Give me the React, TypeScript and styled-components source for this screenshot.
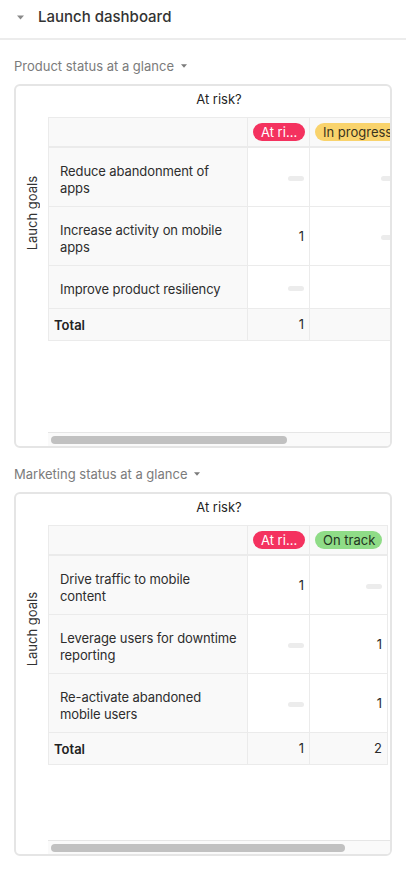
import React from "react";
import styled, { createGlobalStyle } from "styled-components";

const GlobalStyle = createGlobalStyle`
  html, body { margin: 0; padding: 0; background: #fff; }
  body {
    font-family: Inter, "Noto Sans", "Liberation Sans", sans-serif;
    color: #2b2b2b;
    -webkit-font-smoothing: antialiased;
  }
  * { box-sizing: border-box; }
`;

type Tone = "red" | "yellow" | "green";

const toneBg: Record<Tone, string> = {
  red: "#f4325f",
  yellow: "#f9d36c",
  green: "#8fdc87",
};
const toneFg: Record<Tone, string> = {
  red: "#ffffff",
  yellow: "#3a3320",
  green: "#22331f",
};

type Cell = number | null;

interface Column {
  label: string;
  tone: Tone;
  width: number;
  truncate?: boolean;
}

interface Report {
  title: string;
  columns: Column[];
  rows: { lines: string[]; values: Cell[] }[];
  totals: Cell[];
  contentWidth: number;
}

const reports: Report[] = [
  {
    title: "Product status at a glance",
    columns: [
      { label: "At risk", tone: "red", width: 62, truncate: true },
      { label: "In progress", tone: "yellow", width: 93 },
      { label: "On track", tone: "green", width: 132 },
    ],
    rows: [
      { lines: ["Reduce abandonment of", "apps"], values: [null, null, 1] },
      { lines: ["Increase activity on mobile", "apps"], values: [1, null, null] },
      { lines: ["Improve product resiliency"], values: [null, 1, null] },
    ],
    totals: [1, 1, 1],
    contentWidth: 487,
  },
  {
    title: "Marketing status at a glance",
    columns: [
      { label: "At risk", tone: "red", width: 62, truncate: true },
      { label: "On track", tone: "green", width: 78 },
    ],
    rows: [
      { lines: ["Drive traffic to mobile", "content"], values: [1, null] },
      { lines: ["Leverage users for downtime", "reporting"], values: [null, 1] },
      { lines: ["Re-activate abandoned", "mobile users"], values: [null, 1] },
    ],
    totals: [1, 2],
    contentWidth: 391,
  },
];

const LABEL_COL = 200;
const VIEWPORT = 342;
const TRACK_INNER = 336;
const rowHeight = (lines: number) => 26 + lines * 16;

/* ---------- page header ---------- */

const Page = styled.div`
  width: 406px;
  padding-bottom: 20px;
`;

const Header = styled.header`
  display: flex;
  align-items: center;
  gap: 14px;
  padding: 8px 0 12px 17px;
  border-bottom: 2px solid #ececec;
`;

const HeaderTitle = styled.h1`
  margin: 0;
  font-size: 15px;
  font-weight: 500;
  line-height: 18px;
  color: #333;
`;

const Sections = styled.div`
  display: flex;
  flex-direction: column;
  gap: 16px;
  padding: 16px 14px 0;
`;

const Section = styled.section`
  display: flex;
  flex-direction: column;
  gap: 8px;
`;

const SectionLabel = styled.div`
  display: flex;
  align-items: center;
  gap: 7px;
  font-size: 13px;
  line-height: 20px;
  color: #7b7b7b;
`;

/* ---------- card ---------- */

const Card = styled.div`
  display: flex;
  border: 2px solid #e5e5e5;
  border-radius: 6px;
  overflow: hidden;
  background: #fff;
`;

const AxisCol = styled.div`
  width: 32px;
  flex: none;
  padding-top: 31px;
`;

const AxisBox = styled.div<{ $h: number }>`
  height: ${(p) => p.$h}px;
  display: flex;
  align-items: center;
  justify-content: center;
`;

const AxisLabel = styled.span`
  writing-mode: vertical-rl;
  transform: rotate(180deg);
  font-size: 13px;
  line-height: 16px;
  color: #333;
  white-space: nowrap;
`;

const Main = styled.div`
  width: ${VIEWPORT}px;
  flex: none;
  display: flex;
  flex-direction: column;
`;

const CardTitle = styled.div`
  padding: 4px 0 9px;
  text-align: center;
  font-size: 13px;
  font-weight: 400;
  line-height: 18px;
  color: #1f1f1f;
`;

const Viewport = styled.div`
  height: 315px;
  overflow: hidden;
`;

const Table = styled.div`
  display: flex;
  flex-direction: column;
  width: max-content;
  border-top: 1px solid #ebebeb;
`;

const Row = styled.div<{ $cols: string; $kind: "head" | "body" | "total" }>`
  display: grid;
  grid-template-columns: ${(p) => p.$cols};
  background: ${(p) => (p.$kind === "body" ? "#fff" : "#f9f9f9")};
  border-bottom: ${(p) => (p.$kind === "head" ? "2px" : "1px")} solid #ebebeb;
`;

const HeadCell = styled.div`
  height: 28px;
  display: flex;
  align-items: center;
  padding: 0 4px 0 5px;
  border-right: 1px solid #ebebeb;
  overflow: hidden;
  &:first-child { border-left: 1px solid #ebebeb; }
`;

const LabelCell = styled.div<{ $h: number }>`
  height: ${(p) => p.$h}px;
  background: #f9f9f9;
  border-left: 1px solid #ebebeb;
  border-right: 1px solid #ebebeb;
  padding: 15px 4px 0 11px;
  font-size: 13px;
  line-height: 17px;
  letter-spacing: -0.1px;
  color: #2d2d2d;
`;

const TotalCell = styled.div`
  height: 31px;
  display: flex;
  align-items: center;
  background: #f9f9f9;
  border-left: 1px solid #ebebeb;
  border-right: 1px solid #ebebeb;
  padding: 0 8px 0 5px;
  font-size: 13px;
  font-weight: 600;
  color: #222;
`;

const Line = styled.span`
  display: block;
  white-space: nowrap;
`;

const ValueCell = styled.div`
  display: flex;
  align-items: center;
  justify-content: flex-end;
  padding: 0 5px;
  border-right: 1px solid #ebebeb;
  font-size: 13px;
  line-height: 17px;
  color: #2b2b2b;
`;

const Pill = styled.span<{ $tone: Tone; $truncate?: boolean }>`
  display: inline-block;
  flex: none;
  max-width: ${(p) => (p.$truncate ? "100%" : "none")};
  height: 18px;
  padding: 0 7px 0 8px;
  border-radius: 9px;
  background: ${(p) => toneBg[p.$tone]};
  color: ${(p) => toneFg[p.$tone]};
  font-size: 13px;
  line-height: 18px;
  white-space: nowrap;
  overflow: hidden;
  text-overflow: ellipsis;
`;

const Dash = styled.span`
  width: 16px;
  height: 5px;
  margin-top: 3px;
  border-radius: 3px;
  background: #ececec;
`;

const Track = styled.div`
  height: 14px;
  padding: 3px;
  border-top: 1px solid #e6e6e6;
  background: #fafafa;
`;

const Thumb = styled.div`
  height: 8px;
  border-radius: 4px;
  background: #c1c1c1;
`;

/* ---------- icons ---------- */

const Caret = ({ w, h, color }: { w: number; h: number; color: string }) => (
  <svg width={w} height={h} viewBox="0 0 10 6" aria-hidden>
    <polygon points="0,0 10,0 5,6" fill={color} />
  </svg>
);

/* ---------- components ---------- */

function PivotCard({ report }: { report: Report }) {
  const cols = [LABEL_COL, ...report.columns.map((c) => c.width)]
    .map((w) => `${w}px`)
    .join(" ");
  const thumbW = Math.round((TRACK_INNER * VIEWPORT) / report.contentWidth);
  const axisH = 31 + report.rows.reduce((s, r) => s + rowHeight(r.lines.length) + 1, 0);

  const renderValue = (v: Cell, key: number) => (
    <ValueCell key={key}>{v === null ? <Dash /> : v}</ValueCell>
  );

  return (
    <Card>
      <AxisCol>
        <AxisBox $h={axisH}>
          <AxisLabel>Lauch goals</AxisLabel>
        </AxisBox>
      </AxisCol>
      <Main>
        <CardTitle>At risk?</CardTitle>
        <Viewport>
          <Table>
            <Row $cols={cols} $kind="head">
              <HeadCell />
              {report.columns.map((c) => (
                <HeadCell key={c.label}>
                  <Pill $tone={c.tone} $truncate={c.truncate}>
                    {c.label}
                  </Pill>
                </HeadCell>
              ))}
            </Row>
            {report.rows.map((r) => (
              <Row key={r.lines.join(" ")} $cols={cols} $kind="body">
                <LabelCell $h={rowHeight(r.lines.length)}>
                  {r.lines.map((l) => (
                    <Line key={l}>{l}</Line>
                  ))}
                </LabelCell>
                {r.values.map(renderValue)}
              </Row>
            ))}
            <Row $cols={cols} $kind="total">
              <TotalCell>Total</TotalCell>
              {report.totals.map((v, i) => (
                <ValueCell key={i}>{v}</ValueCell>
              ))}
            </Row>
          </Table>
        </Viewport>
        <Track>
          <Thumb style={{ width: thumbW }} />
        </Track>
      </Main>
    </Card>
  );
}

export default function App() {
  return (
    <Page>
      <GlobalStyle />
      <Header>
        <Caret w={7} h={5} color="#8a8a8a" />
        <HeaderTitle>Launch dashboard</HeaderTitle>
      </Header>
      <Sections>
        {reports.map((r) => (
          <Section key={r.title}>
            <SectionLabel>
              {r.title}
              <Caret w={6} h={4} color="#7b7b7b" />
            </SectionLabel>
            <PivotCard report={r} />
          </Section>
        ))}
      </Sections>
    </Page>
  );
}
